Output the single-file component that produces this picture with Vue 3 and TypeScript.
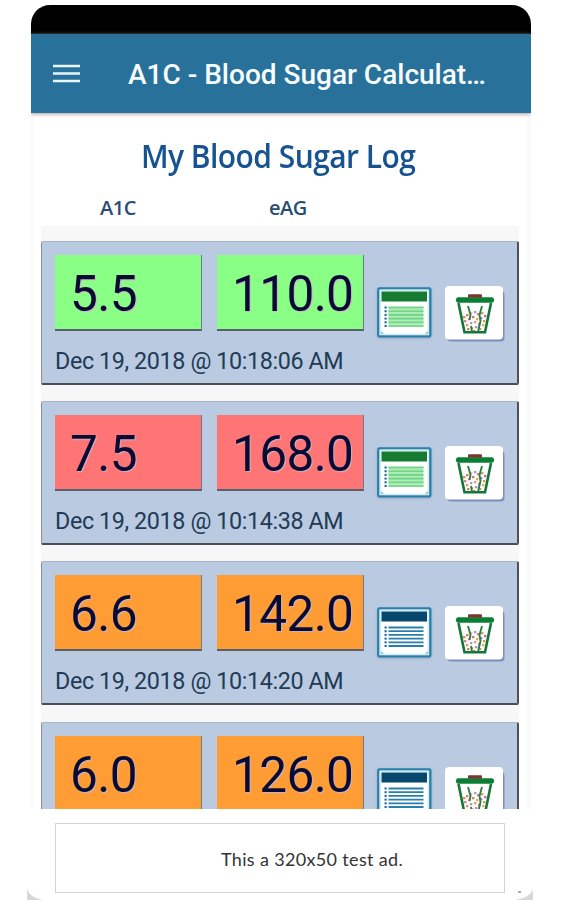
<script setup lang="ts">
interface Entry {
  a1c: string
  eag: string
  date?: string
  level: 'good' | 'high' | 'medium'
  sheet: 'green' | 'blue'
}

const entries: Entry[] = [
  { a1c: '5.5', eag: '110.0', date: 'Dec 19, 2018 @ 10:18:06 AM', level: 'good', sheet: 'green' },
  { a1c: '7.5', eag: '168.0', date: 'Dec 19, 2018 @ 10:14:38 AM', level: 'high', sheet: 'green' },
  { a1c: '6.6', eag: '142.0', date: 'Dec 19, 2018 @ 10:14:20 AM', level: 'medium', sheet: 'blue' },
  { a1c: '6.0', eag: '126.0', level: 'medium', sheet: 'blue' },
]

const lines = [20.5, 24.2, 27.9, 31.6, 35.3, 39]

// Scraps of paper in the bin: x, y, colour
const scraps: [number, number, string][] = [
  [19, 31, '#e88a42'], [22, 29, '#d87878'], [26, 27, '#f0b878'], [30, 26, '#9a9ee0'],
  [33, 28, '#df8176'], [37, 27, '#e29a50'], [40, 30, '#d86f92'], [20, 35, '#d77b92'],
  [24, 33, '#f0ad60'], [28, 31, '#df7474'], [32, 33, '#e9a358'], [36, 32, '#a88ac8'],
  [39, 35, '#e9964d'], [22, 39, '#e9964d'], [26, 37, '#9b95d9'], [30, 36, '#e59a65'],
  [34, 38, '#d9727d'], [38, 39, '#e9ae6f'], [23, 43, '#d97979'], [27, 42, '#e7a75b'],
  [31, 41, '#ad92cf'], [35, 43, '#e48a55'], [29, 45, '#d97979'],
]
</script>

<template>
  <main class="page">
    <div class="phone">
      <div class="status"></div>
      <header class="appbar">
        <svg class="menu" width="27" height="20" viewBox="0 0 27 20">
          <path d="M0 2H27M0 9.5H27M0 17H27" stroke="#e8f6fc" stroke-width="2.7" />
        </svg>
        <h1>A1C - Blood Sugar Calculat…</h1>
      </header>
      <h2>My Blood Sugar Log</h2>
      <div class="columns"><span>A1C</span><span>eAG</span></div>
      <section class="list">
        <article v-for="e in entries" :key="e.eag" class="card" :class="e.level">
          <div class="data">
            <div class="values">
              <div class="value">{{ e.a1c }}</div>
              <div class="value">{{ e.eag }}</div>
            </div>
            <p v-if="e.date">{{ e.date }}</p>
          </div>
          <svg class="sheet" :class="e.sheet" width="55" height="51" viewBox="0 0 55 51">
            <rect x="1.3" y="1.3" width="52" height="48" rx="1" fill="#fff" class="frame" />
            <rect x="3.4" y="3.4" width="47.8" height="43.8" fill="none" stroke="#cceaf2" stroke-width="1.2" />
            <rect x="4.5" y="4.5" width="45.5" height="10" class="band" />
            <rect v-if="e.sheet === 'green'" x="11.5" y="19.5" width="35" height="20.5" fill="#a9efb3" />
            <g v-for="y in lines" :key="y">
              <path :d="`M7.5 ${y}h2.2`" class="dot" />
              <path :d="`M11.5 ${y}h35`" class="line" />
            </g>
            <path d="M4 45l2 2M51 45l-2 2" stroke="#79b9d3" stroke-width="1.4" />
          </svg>
          <svg class="trash" width="60" height="57" viewBox="0 0 60 57">
            <rect x="2" y="5" width="57.5" height="50.5" rx="4" fill="#7c8fbd" />
            <rect x="0" y="0" width="58" height="53.5" rx="4" fill="#fff" />
            <rect v-for="(s, i) in scraps" :key="i" :x="s[0] - 1" :y="s[1] - 1" width="2.4" height="2.3" :fill="s[2]" />
            <path d="M23 20L25.5 29L24.5 34M37 20L34.5 29L35.5 35L33 46M27 46L26 40" fill="none" stroke="#2b7d49" stroke-width="1.9" />
            <path d="M13.5 17L19.5 46.3H40L46 17" fill="none" stroke="#147638" stroke-width="2.6" />
            <rect x="11" y="11.2" width="38" height="5.6" rx="2.3" fill="#0b7d35" />
            <rect x="23" y="8.3" width="14" height="3.4" rx="1" fill="#713c2e" />
          </svg>
        </article>
      </section>
      <footer>
        <div class="ad">This a 320x50 test ad.</div>
      </footer>
    </div>
    <svg class="corner left" width="16" height="11"><path d="M0 0C3 7 8 9 16 11H0Z" fill="#d8d8d8" /></svg>
    <svg class="corner right" width="18" height="11"><path d="M18 0C16 6 10 9 0 11H18Z" fill="#d8d8d8" /></svg>
    <i class="speck"></i>
  </main>
</template>

<style>
body { margin: 0; background: #fff; overflow: hidden; }
</style>

<style scoped>
* { box-sizing: border-box; }
.page { position: relative; width: 563px; height: 900px; overflow: hidden; padding: 5px 32px 0 31px; background: #fff; }
.phone { width: 500px; height: 895px; display: flex; flex-direction: column; border-radius: 19px 19px 0 0; overflow: hidden; background: linear-gradient(90deg, #fbfbfb 0 3px, #fff 3px 496px, #fafafa 496px); }
.status { height: 29px; flex: none; background: #000; }
.appbar { height: 79px; flex: none; display: flex; align-items: center; padding-left: 22px; background: #28719b; box-shadow: 0 1px 4px #a99; z-index: 1; }
.menu { flex: none; display: block; }
h1 { margin: 2px 0 0 48px; font: 500 28px/36px Roboto, sans-serif; color: #f8fdff; white-space: nowrap; }
h2 { flex: none; height: 79px; margin: 0; padding: 20px 0 0 110px; font: 600 32.5px/46px "Open Sans", sans-serif; letter-spacing: -0.6px; transform: scaleX(0.923); transform-origin: 110px 0; color: #175291; white-space: nowrap; }
.columns { flex: none; height: 34px; display: flex; padding-left: 69px; font: 600 20px/32px "Open Sans", sans-serif; letter-spacing: -0.5px; color: #294d73; }
.columns span { width: 169px; }
.list { height: 583px; flex: none; overflow: hidden; margin: 0 12px 0 10px; padding-top: 15px; display: flex; flex-direction: column; gap: 16.2px; background: #f7f7f8; }
.card { height: 144px; flex: none; display: flex; align-items: flex-start; padding: 12px 0 0 13px; background: #bacae0; border: solid; border-width: 1px 2px 2px 1px; border-color: #aab4c4 #4b5058 #484c55 #8890a0; border-radius: 2px; }
.data { width: 322px; flex: none; padding-top: 1px; }
.values { display: flex; gap: 15px; }
.value { width: 147px; height: 76px; padding-left: 15px; border: solid; border-width: 0 1.5px 2px 0; border-color: transparent #69798b #59606b transparent; font: 400 49.5px/78px Roboto, sans-serif; letter-spacing: -0.6px; color: #0a0b35; text-shadow: 1px 1px 1px #cbb5c5; background: #8aff86; }
.high .value { background: #ff7474; }
.medium .value { background: #ff9c34; }
p { margin: 15px 0 0; font: 400 23.3px/31px Roboto, sans-serif; letter-spacing: -0.38px; color: #203b55; white-space: nowrap; }
.sheet { margin-top: 33px; flex: none; filter: drop-shadow(0 1px 1px #93a6bd); }
.frame { stroke: #2681ad; stroke-width: 2.3; }
.band { fill: #06486d; }
.line { stroke: #287fac; stroke-width: 1.8; }
.dot { stroke: #246f9b; stroke-width: 2.1; }
.green .band { fill: #147b31; }
.green .line { stroke: #73d18a; stroke-width: 1.6; }
.trash { margin: 32px 0 0 13px; flex: none; }
footer { height: 86px; flex: none; padding: 14px 26px 0 24px; background: #fff; }
.ad { height: 70px; border: 1.5px solid #d2d5d6; padding-left: 165px; font: 400 18px/70px Lato, sans-serif; letter-spacing: 0.34px; color: #333; white-space: nowrap; }
.corner { position: absolute; bottom: 0; }
.left { left: 27px; }
.right { left: 515px; }
.speck { position: absolute; left: 518px; top: 891px; width: 3px; height: 2px; background: #aaa; }
</style>
